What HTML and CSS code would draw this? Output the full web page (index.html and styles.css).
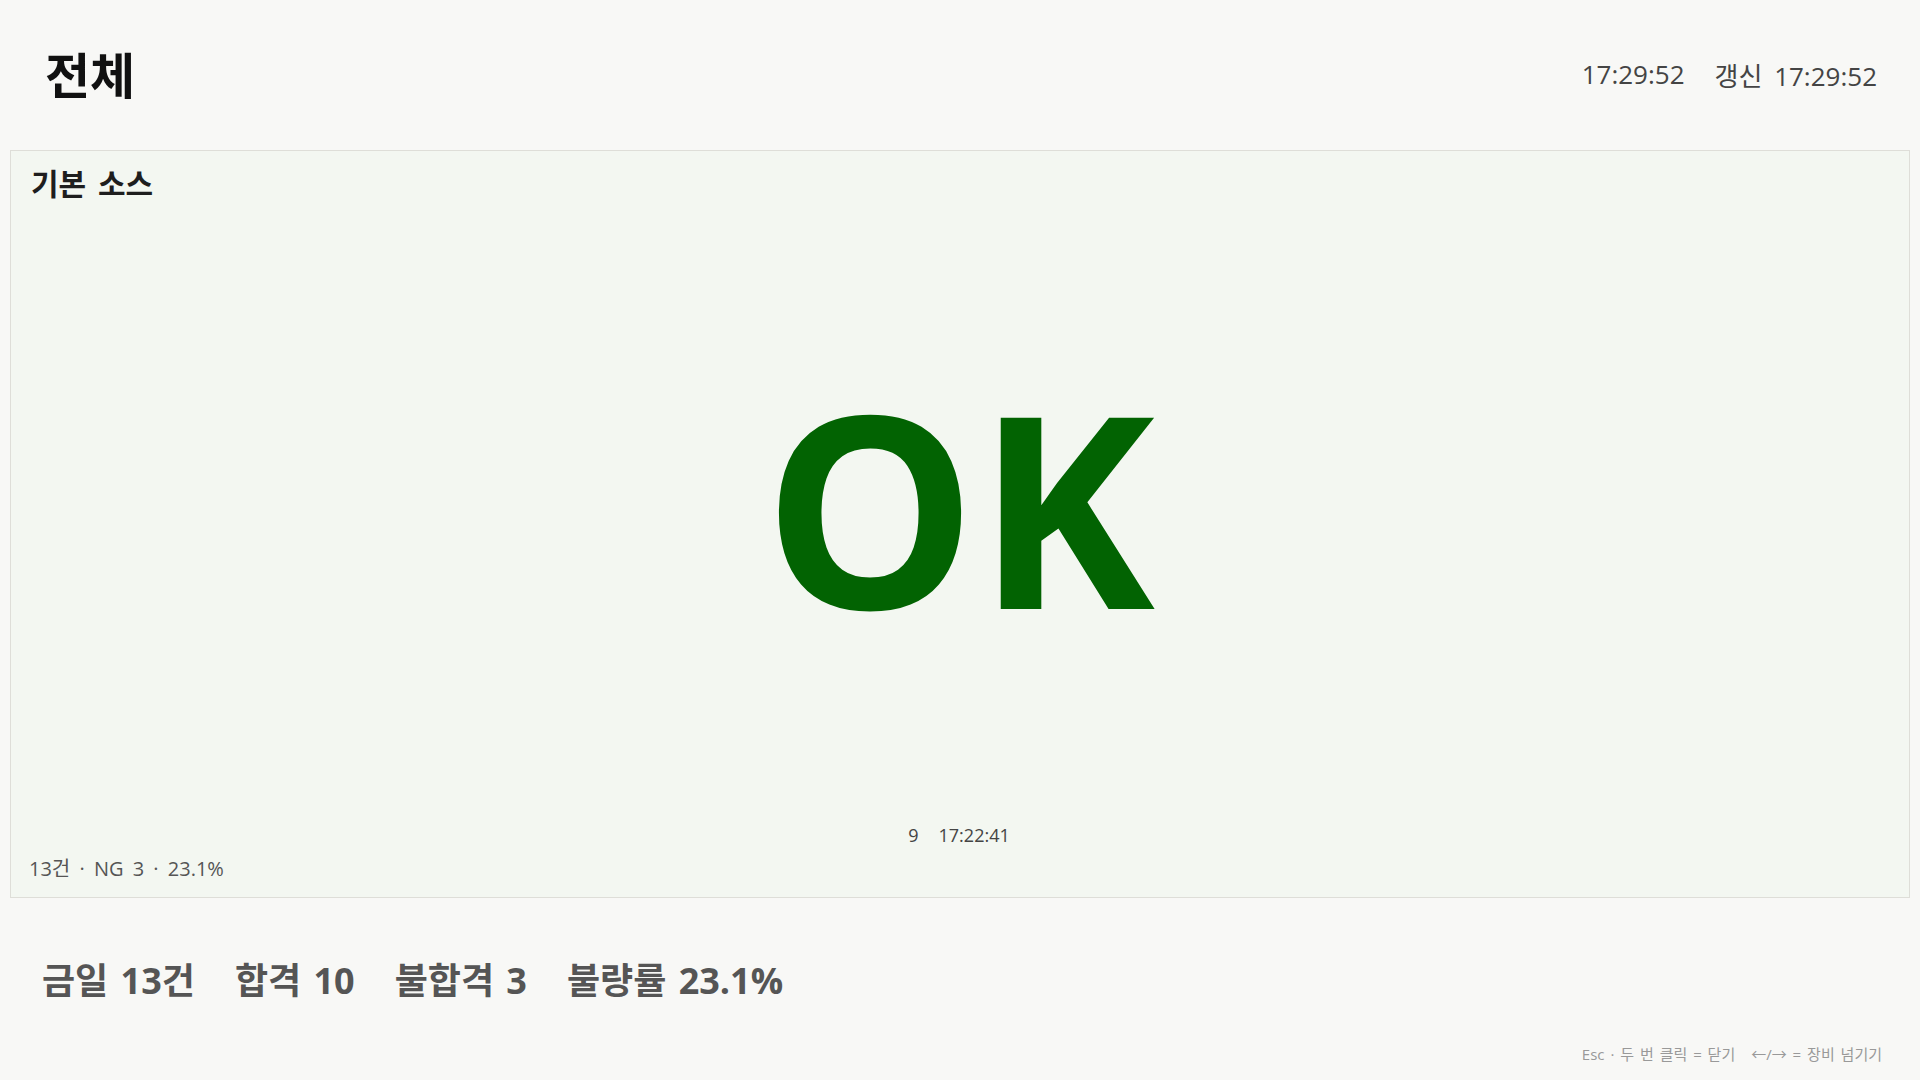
FILE: index.html
```html
<!DOCTYPE html>
<html lang="ko">
<head>
<meta charset="utf-8">
<title>전체</title>
<link rel="stylesheet" href="styles.css">
</head>
<body>
<div class="page">
  <header class="top">
    <h1 class="title">전체</h1>
    <div class="clock">
      <span>17:29:52</span>
      <span>갱신 17:29:52</span>
    </div>
  </header>
  <section class="panel">
    <div class="panel-name">기본 소스</div>
    <div class="panel-result">
      <span class="result ok">OK</span>
    </div>
    <div class="panel-meta">
      <span>9</span>
      <span>17:22:41</span>
    </div>
    <div class="panel-stats">13건 · NG 3 · 23.1%</div>
  </section>
  <div class="summary">
    <span>금일 13건</span>
    <span>합격 10</span>
    <span>불합격 3</span>
    <span>불량률 23.1%</span>
  </div>
  <div class="hint">
    <span>Esc · 두 번 클릭 = 닫기</span>
    <span>←/→ = 장비 넘기기</span>
  </div>
</div>
</body>
</html>
```
FILE: styles.css
```css
html, body {
  margin: 0;
  padding: 0;
  height: 100%;
}
body {
  background: #f8f8f6;
  font-family: "Open Sans", "Noto Sans CJK KR", sans-serif;
  color: #222;
}
.page {
  height: 1080px;
  padding: 0 10px;
  box-sizing: border-box;
  display: flex;
  flex-direction: column;
}
.top {
  height: 150px;
  flex: none;
  display: flex;
  align-items: center;
  justify-content: space-between;
  padding: 0 33px 0 35px;
}
.title {
  margin: 0;
  font-size: 49px;
  font-weight: 700;
  color: #111;
  line-height: 1;
}
.clock {
  display: flex;
  gap: 30px;
  font-size: 26px;
  color: #444;
  word-spacing: 5px;
}
.panel {
  height: 748px;
  flex: none;
  box-sizing: border-box;
  background: #f3f7f1;
  border: 1px solid #deded8;
  padding: 15px 20px 16px 18px;
  display: flex;
  flex-direction: column;
}
.panel-name {
  font-size: 30px;
  font-weight: 700;
  color: #1e1e1e;
  line-height: 36px;
  padding-left: 2px;
  word-spacing: 4px;
}
.panel-result {
  flex: 1;
  display: flex;
  align-items: center;
  justify-content: center;
  padding-bottom: 14px;
}
.result {
  font-size: 268px;
  font-weight: 700;
  line-height: 1;
}
.result.ok {
  color: #026302;
}
.panel-meta {
  display: flex;
  justify-content: center;
  gap: 20px;
  font-size: 18px;
  line-height: 22px;
  color: #444;
}
.panel-stats {
  margin-top: 11px;
  font-size: 20px;
  line-height: 24px;
  color: #555;
  word-spacing: 4px;
}
.summary {
  margin-top: 59px;
  padding-left: 32px;
  display: flex;
  gap: 40px;
  font-size: 36px;
  font-weight: 700;
  line-height: 47px;
  color: #555;
  word-spacing: 3px;
}
.hint {
  margin-top: auto;
  margin-bottom: 16px;
  display: flex;
  justify-content: flex-end;
  gap: 16px;
  padding-right: 28px;
  font-size: 15px;
  line-height: 20px;
  color: #999;
  word-spacing: 2px;
}
```
